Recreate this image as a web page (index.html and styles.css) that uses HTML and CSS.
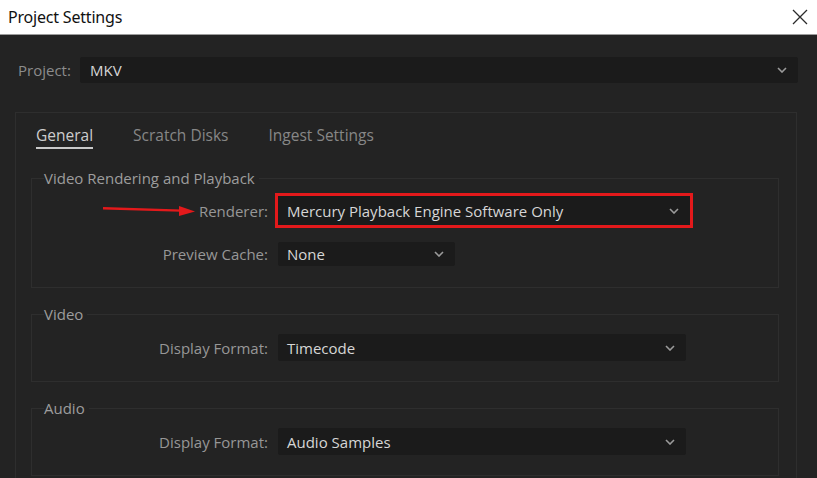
FILE: index.html
```html
<!DOCTYPE html>
<html lang="en">
<head>
    <meta charset="UTF-8">
    <meta name="viewport" content="width=device-width, initial-scale=1.0">
    <title>Project Settings</title>
    <link rel="stylesheet" href="styles.css">
</head>
<body>
    <div class="titlebar">
        <span class="title">Project Settings</span>
        <button class="close" aria-label="Close">
            <svg width="16" height="16" viewBox="0 0 16 16"><path d="M1 1 L15 15 M15 1 L1 15" stroke="#2b2b2b" stroke-width="1.3" fill="none"/></svg>
        </button>
    </div>

    <div class="content">
        <div class="project-row">
            <span class="project-label">Project:</span>
            <div class="dropdown project-select">
                <span>MKV</span>
                <svg class="chevron" width="10" height="6" viewBox="0 0 10 6"><path d="M1 1 L5 5 L9 1" stroke="#9b9b9b" stroke-width="1.6" fill="none"/></svg>
            </div>
        </div>

        <div class="panel">
            <div class="tabs">
                <span class="tab active">General</span>
                <span class="tab">Scratch Disks</span>
                <span class="tab">Ingest Settings</span>
            </div>

            <fieldset class="group first">
                <legend>Video Rendering and Playback</legend>
                <div class="row renderer-row">
                    <svg class="arrow" width="92" height="12" viewBox="0 0 92 12"><path d="M0 3.2 L78 5.6" stroke="#e3191b" stroke-width="2.4" fill="none"/><polygon points="76,1 92,6.5 76,11" fill="#e3191b"/></svg>
                    <label>Renderer:</label>
                    <div class="dropdown highlight renderer">
                        <span>Mercury Playback Engine Software Only</span>
                        <svg class="chevron" width="10" height="6" viewBox="0 0 10 6"><path d="M1 1 L5 5 L9 1" stroke="#9b9b9b" stroke-width="1.6" fill="none"/></svg>
                    </div>
                </div>
                <div class="row cache-row">
                    <label>Preview Cache:</label>
                    <div class="dropdown small">
                        <span>None</span>
                        <svg class="chevron" width="10" height="6" viewBox="0 0 10 6"><path d="M1 1 L5 5 L9 1" stroke="#9b9b9b" stroke-width="1.6" fill="none"/></svg>
                    </div>
                </div>
            </fieldset>

            <fieldset class="group video">
                <legend>Video</legend>
                <div class="row">
                    <label>Display Format:</label>
                    <div class="dropdown wide">
                        <span>Timecode</span>
                        <svg class="chevron" width="10" height="6" viewBox="0 0 10 6"><path d="M1 1 L5 5 L9 1" stroke="#9b9b9b" stroke-width="1.6" fill="none"/></svg>
                    </div>
                </div>
            </fieldset>

            <fieldset class="group audio">
                <legend>Audio</legend>
                <div class="row">
                    <label>Display Format:</label>
                    <div class="dropdown wide">
                        <span>Audio Samples</span>
                        <svg class="chevron" width="10" height="6" viewBox="0 0 10 6"><path d="M1 1 L5 5 L9 1" stroke="#9b9b9b" stroke-width="1.6" fill="none"/></svg>
                    </div>
                </div>
            </fieldset>
        </div>
    </div>
</body>
</html>
```
FILE: styles.css
```css
:root {
    --bg-color: #232323;
    --field-color: #1b1b1b;
    --line-color: #2e2e2e;
    --label-color: #979797;
    --value-color: #d6d6d6;
    --red: #e3191b;
}
body {
    font-family: 'Open Sans', 'Noto Sans', sans-serif;
    margin: 0;
    background-color: var(--bg-color);
    color: var(--label-color);
    font-size: 15px;
    overflow: hidden;
    height: 478px;
}
.titlebar {
    height: 34px;
    background-color: #fff;
    border-bottom: 1px solid #9c9c9c;
    display: flex;
    align-items: center;
    justify-content: space-between;
}
.title {
    font-family: 'Noto Sans', sans-serif;
    font-size: 16px;
    color: #111;
    padding-left: 8px;
    letter-spacing: -0.2px;
}
.close {
    background: none;
    border: none;
    padding: 0;
    margin-right: 9px;
    display: flex;
}
.content {
    padding: 0 19px 0 15px;
}
.project-row {
    display: flex;
    align-items: center;
    margin-top: 22px;
    height: 26px;
}
.project-label {
    width: 62px;
    padding-left: 3px;
    color: #8c8c8c;
}
.dropdown {
    background-color: var(--field-color);
    border-radius: 2px;
    display: flex;
    align-items: center;
    justify-content: space-between;
    padding: 0 11px 0 9px;
    color: var(--value-color);
    box-sizing: border-box;
}
.project-select {
    flex-grow: 1;
    height: 26px;
    padding-left: 10px;
}
.panel {
    margin-top: 29px;
    margin-right: 1px;
    border: 1px solid var(--line-color);
    height: 400px;
}
.tabs {
    display: flex;
    padding: 12px 0 0 20px;
}
.tab {
    font-size: 15.5px;
    line-height: 20px;
    padding-bottom: 2px;
    margin-right: 40px;
    color: #878787;
    border-bottom: 2px solid transparent;
}
.tab.active {
    color: #cdcdcd;
    border-bottom-color: #c9c9c9;
}
.group {
    border: 1px solid var(--line-color);
    margin: 0 17px 0 15px;
    padding: 0 0 20px 0;
}
.group legend {
    margin-left: 12px;
    padding: 0 4px 0 0;
    line-height: 20px;
    font-size: 15px;
    color: #9d9d9d;
}
.group.first {
    margin-top: 19px;
    padding-bottom: 21px;
}
.group.video {
    margin-top: 16px;
}
.group.audio {
    margin-top: 16px;
}
.row {
    display: grid;
    grid-template-columns: 236px auto;
    column-gap: 10px;
    align-items: center;
    justify-content: start;
    margin-top: 10px;
    position: relative;
}
.row label {
    text-align: right;
}
.renderer-row {
    margin-top: 8px;
}
.cache-row {
    margin-top: 17px;
}
.renderer {
    width: 412px;
    height: 29px;
    outline: 3px solid var(--red);
    border-radius: 0;
}
.small {
    width: 177px;
    height: 24px;
}
.wide {
    width: 408px;
    height: 27px;
}
.arrow {
    position: absolute;
    left: 71px;
    top: 9px;
}
```
